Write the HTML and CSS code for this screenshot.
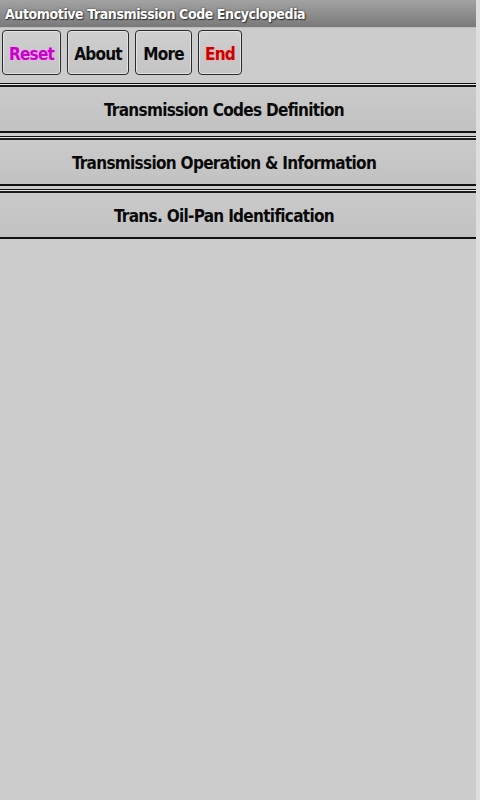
FILE: index.html
```html
<!DOCTYPE html>
<html>
<head>
<meta charset="utf-8">
<link rel="stylesheet" href="styles.css">
</head>
<body>
<div class="screen">
  <div class="titlebar">Automotive Transmission Code Encyclopedia</div>
  <div class="toolbar">
    <div class="btn btn-reset">Reset</div>
    <div class="btn btn-about">About</div>
    <div class="btn btn-more">More</div>
    <div class="btn btn-end">End</div>
  </div>
  <div class="list">
    <div class="row"><div class="band">Transmission Codes Definition</div></div>
    <div class="row"><div class="band">Transmission Operation &amp; Information</div></div>
    <div class="row"><div class="band">Trans. Oil-Pan Identification</div></div>
  </div>
</div>
</body>
</html>
```
FILE: styles.css
```css
html, body {
  margin: 0;
  padding: 0;
}
body {
  background: #dedede;
  font-family: "DejaVu Sans Condensed", "Liberation Sans", sans-serif;
  font-weight: bold;
}
.screen {
  width: 476px;
  height: 800px;
  background: #cccccc;
}
.titlebar {
  height: 28px;
  box-sizing: border-box;
  border-bottom: 1px solid #bdbdbd;
  background: linear-gradient(#a2a2a2, #7a7a7a);
  color: #ffffff;
  font-size: 14px;
  letter-spacing: -0.4px;
  line-height: 28px;
  padding-left: 5px;
  text-shadow: 0 0 2px #333, 1px 1px 1px #333;
  white-space: nowrap;
}
.toolbar {
  display: flex;
  gap: 6px;
  padding: 2px 0 0 2px;
}
.btn {
  height: 45px;
  box-sizing: border-box;
  border: 1px solid #2a2a2a;
  border-radius: 4px;
  background: linear-gradient(#cfcfcf, #c4c4c4);
  box-shadow: inset 0 0 0 1px #e2e2e2;
  font-size: 17px;
  letter-spacing: -0.8px;
  line-height: 46px;
  text-align: center;
  color: #0a0a0a;
}
.btn-reset {
  width: 59px;
  color: #cc00cc;
  text-shadow: 0 0 2px #f49cf4;
}
.btn-about {
  width: 62px;
}
.btn-more {
  width: 57px;
}
.btn-end {
  width: 44px;
  color: #cc0000;
  text-shadow: 0 0 2px #f4a0a0;
}
.list {
  display: flex;
  flex-direction: column;
  gap: 3px;
  margin-top: 8px;
}
.row {
  border-top: 1px solid #111;
  padding-top: 1px;
  background: #e6e6e6;
}
.band {
  height: 44px;
  border-top: 2px solid #1c1c1c;
  border-bottom: 2px solid #111;
  background: linear-gradient(#cacaca, #c2c2c2);
  text-align: center;
  padding-right: 28px;
  font-size: 17px;
  letter-spacing: -0.7px;
  line-height: 47px;
  color: #0a0a0a;
}
```
